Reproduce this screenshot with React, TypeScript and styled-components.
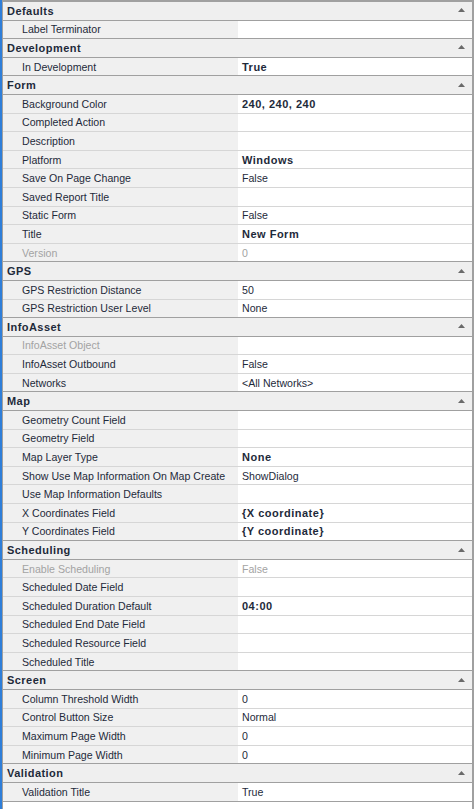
import styled, { createGlobalStyle } from "styled-components";

interface IItem {
  name: string;
  value?: string;
  bold?: boolean;
  disabled?: boolean;
}

interface ISection {
  title: string;
  items: IItem[];
}

const sections: ISection[] = [
  { title: "Defaults", items: [{ name: "Label Terminator" }] },
  {
    title: "Development",
    items: [{ name: "In Development", value: "True", bold: true }],
  },
  {
    title: "Form",
    items: [
      { name: "Background Color", value: "240, 240, 240", bold: true },
      { name: "Completed Action" },
      { name: "Description" },
      { name: "Platform", value: "Windows", bold: true },
      { name: "Save On Page Change", value: "False" },
      { name: "Saved Report Title" },
      { name: "Static Form", value: "False" },
      { name: "Title", value: "New Form", bold: true },
      { name: "Version", value: "0", disabled: true },
    ],
  },
  {
    title: "GPS",
    items: [
      { name: "GPS Restriction Distance", value: "50" },
      { name: "GPS Restriction User Level", value: "None" },
    ],
  },
  {
    title: "InfoAsset",
    items: [
      { name: "InfoAsset Object", disabled: true },
      { name: "InfoAsset Outbound", value: "False" },
      { name: "Networks", value: "<All Networks>" },
    ],
  },
  {
    title: "Map",
    items: [
      { name: "Geometry Count Field" },
      { name: "Geometry Field" },
      { name: "Map Layer Type", value: "None", bold: true },
      { name: "Show Use Map Information On Map Create", value: "ShowDialog" },
      { name: "Use Map Information Defaults" },
      { name: "X Coordinates Field", value: "{X coordinate}", bold: true },
      { name: "Y Coordinates Field", value: "{Y coordinate}", bold: true },
    ],
  },
  {
    title: "Scheduling",
    items: [
      { name: "Enable Scheduling", value: "False", disabled: true },
      { name: "Scheduled Date Field" },
      { name: "Scheduled Duration Default", value: "04:00", bold: true },
      { name: "Scheduled End Date Field" },
      { name: "Scheduled Resource Field" },
      { name: "Scheduled Title" },
    ],
  },
  {
    title: "Screen",
    items: [
      { name: "Column Threshold Width", value: "0" },
      { name: "Control Button Size", value: "Normal" },
      { name: "Maximum Page Width", value: "0" },
      { name: "Minimum Page Width", value: "0" },
    ],
  },
  {
    title: "Validation",
    items: [{ name: "Validation Title", value: "True" }],
  },
];

const GlobalStyle = createGlobalStyle`
  html, body {
    margin: 0;
    padding: 0;
    background: #fff;
  }
  body {
    font-family: "Liberation Sans", Arial, sans-serif;
    font-size: 10.6px;
    color: #1e2a3a;
  }
`;

const ROW_H = "18.6px";

export default function App() {
  return (
    <>
      <GlobalStyle />
      <Frame>
        <Grid>
          {sections.map((section) => (
            <Section key={section.title}>
              <Header>
                <HeaderTitle>{section.title}</HeaderTitle>
                <Arrow width="7" height="4" viewBox="0 0 7 4">
                  <path d="M3.5 0 L7 4 L0 4 Z" fill="#6a6a6a" />
                </Arrow>
              </Header>
              {section.items.map((item, i) => (
                <Row key={item.name} $last={i === section.items.length - 1}>
                  <Name $disabled={item.disabled}>{item.name}</Name>
                  <Value $bold={item.bold} $disabled={item.disabled}>
                    {item.value}
                  </Value>
                </Row>
              ))}
            </Section>
          ))}
        </Grid>
      </Frame>
    </>
  );
}

const Frame = styled.div`
  height: 809px;
  width: 474px;
  box-sizing: border-box;
  border-left: 2px solid #2f7ed8;
  display: flex;
`;

const Grid = styled.div`
  flex: 1;
  box-sizing: border-box;
  border-top: 2px solid #a0a0a0;
  border-left: 1px solid #a0a0a0;
  border-right: 2px solid #a0a0a0;
  display: flex;
  flex-direction: column;
`;

const Section = styled.div`
  display: flex;
  flex-direction: column;
`;

const Header = styled.div`
  height: ${ROW_H};
  box-sizing: border-box;
  border-bottom: 1px solid #a0a0a0;
  background: #efefef;
  display: flex;
  align-items: center;
  justify-content: space-between;
  padding: 0 7px 0 4px;
`;

const HeaderTitle = styled.span`
  font-weight: bold;
  letter-spacing: 0.45px;
  font-size: 11px;
`;

const Arrow = styled.svg`
  display: block;
  margin-top: -1px;
`;

const Row = styled.div<{ $last?: boolean }>`
  height: ${ROW_H};
  box-sizing: border-box;
  border-bottom: 1px solid ${(p) => (p.$last ? "#a0a0a0" : "#d6d6d6")};
  display: grid;
  grid-template-columns: 235px 1fr;
`;

const Name = styled.div<{ $disabled?: boolean }>`
  background: #f0f0f0;
  padding-left: 19px;
  display: flex;
  align-items: center;
  white-space: nowrap;
  overflow: hidden;
  color: ${(p) => (p.$disabled ? "#a3a3a3" : "#1e2a3a")};
`;

const Value = styled.div<{ $bold?: boolean; $disabled?: boolean }>`
  background: #fff;
  padding-left: 4px;
  display: flex;
  align-items: center;
  white-space: nowrap;
  font-weight: ${(p) => (p.$bold ? "bold" : "normal")};
  font-size: ${(p) => (p.$bold ? "11px" : "10.6px")};
  letter-spacing: ${(p) => (p.$bold ? "0.5px" : "0")};
  color: ${(p) => (p.$disabled ? "#a3a3a3" : "#1e2a3a")};
`;
